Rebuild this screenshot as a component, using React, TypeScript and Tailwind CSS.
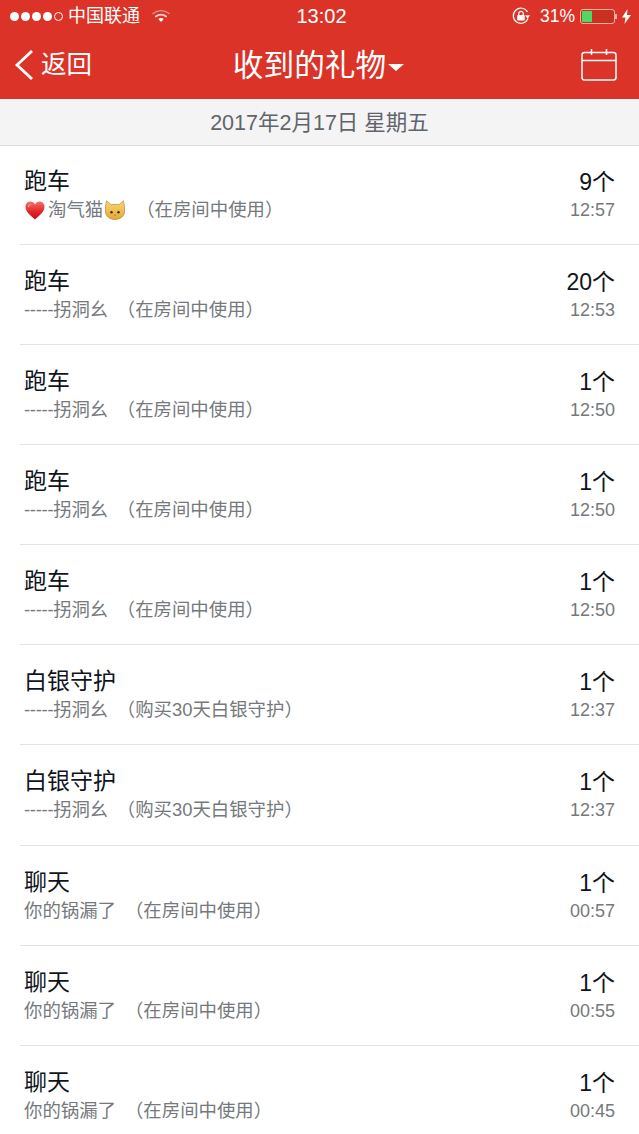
import React from 'react';

const font = { fontFamily: '"Liberation Sans", "Noto Sans CJK SC", sans-serif' };

interface GiftRecord {
  name: string;
  sender: string;
  detail: string;
  count: string;
  time: string;
  emoji?: boolean;
}

const records: GiftRecord[] = [
  { name: '跑车', sender: '淘气猫', detail: '（在房间中使用）', count: '9个', time: '12:57', emoji: true },
  { name: '跑车', sender: '-----拐洞幺', detail: '（在房间中使用）', count: '20个', time: '12:53' },
  { name: '跑车', sender: '-----拐洞幺', detail: '（在房间中使用）', count: '1个', time: '12:50' },
  { name: '跑车', sender: '-----拐洞幺', detail: '（在房间中使用）', count: '1个', time: '12:50' },
  { name: '跑车', sender: '-----拐洞幺', detail: '（在房间中使用）', count: '1个', time: '12:50' },
  { name: '白银守护', sender: '-----拐洞幺', detail: '（购买30天白银守护）', count: '1个', time: '12:37' },
  { name: '白银守护', sender: '-----拐洞幺', detail: '（购买30天白银守护）', count: '1个', time: '12:37' },
  { name: '聊天', sender: '你的锅漏了', detail: '（在房间中使用）', count: '1个', time: '00:57' },
  { name: '聊天', sender: '你的锅漏了', detail: '（在房间中使用）', count: '1个', time: '00:55' },
  { name: '聊天', sender: '你的锅漏了', detail: '（在房间中使用）', count: '1个', time: '00:45' },
];

const Heart = () => (
  <svg width="20" height="19" viewBox="0 0 20 19" className="shrink-0 ml-[1px]">
    <defs>
      <linearGradient id="heart" x1="0" y1="0" x2="0" y2="1">
        <stop offset="0" stopColor="#f4716a" />
        <stop offset=".55" stopColor="#e3262a" />
        <stop offset="1" stopColor="#c40f18" />
      </linearGradient>
    </defs>
    <path d="M10 18.500C5.500 14.500.5 11 .5 5.800.5 2.800 2.700.6 5.300.6 7.300.6 9 1.700 10 3.400 11 1.700 12.700.6 14.700.6c2.600 0 4.800 2.200 4.800 5.200 0 5.200-5 8.700-9.500 12.700z" fill="url(#heart)" />
    <path d="M3 5.500C3.500 3.800 5 3 6.500 3.300 5 4 4 5 3.800 6.500z" fill="#fff" opacity=".55" />
  </svg>
);

const Cat = () => (
  <svg width="20" height="20" viewBox="0 0 20 20" className="shrink-0 ml-[2px]">
    <defs>
      <linearGradient id="cat" x1="0" y1="0" x2="0" y2="1">
        <stop offset="0" stopColor="#f8d873" />
        <stop offset="1" stopColor="#e2a93a" />
      </linearGradient>
    </defs>
    <path d="M1.500.8 6.200 4.800c2.400-.6 5.200-.6 7.600 0L18.500.8c.8 3.600 1.200 7 1.200 10.200 0 5-4.500 8.500-9.700 8.500S.3 16 .3 11C.3 7.800.7 4.400 1.500.8z" fill="url(#cat)" stroke="#a97c2a" strokeWidth=".6" />
    <circle cx="6.500" cy="12.200" r="1.200" fill="#3d2a10" />
    <circle cx="13.500" cy="12.200" r="1.200" fill="#3d2a10" />
    <path d="M9 14.800h2l-1 1z" fill="#7a5417" />
  </svg>
);

const Wifi = () => (
  <svg width="18" height="14" viewBox="0 0 18 14" fill="none" stroke="#fff" strokeLinecap="round">
    <path d="M1 4.500C5.500.7 12.500.7 17 4.500" strokeWidth="1.300" opacity=".45" />
    <path d="M3.800 7.500c3-2.500 7.400-2.500 10.400 0" strokeWidth="1.700" opacity=".8" />
    <path d="M9 13 6.300 9.900c1.500-1.100 3.900-1.100 5.400 0z" fill="#fff" stroke="none" />
  </svg>
);

const OrientationLock = () => (
  <svg width="19" height="18" viewBox="0 0 19 18" fill="none" stroke="#fff">
    <path d="M16 11.500A7.600 7.600 0 1 1 15.500 5" strokeWidth="1.200" />
    <path d="M18 8.200 13.200 8.200 15.600 11.800z" fill="#fff" stroke="none" />
    <rect x="5.200" y="8" width="7.600" height="5.500" rx="1" fill="#fff" stroke="none" />
    <path d="M6.800 8V6.500a2.200 2.200 0 0 1 4.400 0V8" strokeWidth="1.200" />
  </svg>
);

const Bolt = () => (
  <svg width="9" height="15" viewBox="0 0 9 15" fill="#fff">
    <path d="M5.500 0 0 8.500h3.500L2.500 15 9 6H5z" />
  </svg>
);

const CalendarIcon = () => (
  <svg width="36" height="32" viewBox="0 0 36 32" fill="none" stroke="#fff" strokeWidth="1.500">
    <rect x="1" y="3.500" width="34" height="27.500" rx="2.500" />
    <path d="M1 11.500h34" />
    <path d="M10.500 0v6M25.500 0v6" />
  </svg>
);

const App: React.FC = () => {
  return (
    <div className="w-[639px] h-[1134px] overflow-hidden bg-white" style={font}>
      {/* Header */}
      <div className="bg-[#db3327] h-[99px] text-white">
        <div className="h-[32px] flex items-center justify-between pl-[10px] pr-[8px]">
          <div className="w-[230px] flex items-center">
            <div className="flex items-center gap-[2px]">
              <span className="w-[9px] h-[9px] rounded-full bg-white" />
              <span className="w-[9px] h-[9px] rounded-full bg-white" />
              <span className="w-[9px] h-[9px] rounded-full bg-white" />
              <span className="w-[9px] h-[9px] rounded-full bg-white" />
              <span className="w-[9px] h-[9px] rounded-full border border-white" />
            </div>
            <span className="ml-[5px] text-[18px] leading-none">中国联通</span>
            <span className="ml-[12px]"><Wifi /></span>
          </div>
          <span className="ml-[2px] text-[20px] leading-none">13:02</span>
          <div className="w-[230px] flex items-center justify-end">
            <OrientationLock />
            <span className="ml-[9px] mt-[1px] text-[17.500px] leading-none">31%</span>
            <div className="ml-[5px] w-[35px] h-[15px] rounded-[3px] border border-[#f3b0aa] bg-[#c9301f] p-[1px]">
              <div className="w-[10px] h-full bg-[#4cd964]" />
            </div>
            <span className="w-[2px] h-[5px] bg-[#f3b0aa]" />
            <span className="ml-[5px]"><Bolt /></span>
          </div>
        </div>
        <div className="h-[67px] pb-[1px] flex items-center justify-between pl-[14px] pr-[22px]">
          <div className="w-[140px] flex items-center">
            <svg width="20" height="32" viewBox="0 0 20 32" fill="none" stroke="#fff" strokeWidth="2.800">
              <path d="M18 2 3 16l15 14" />
            </svg>
            <span className="ml-[7px] text-[25.500px] leading-none">返回</span>
          </div>
          <div className="ml-[6px] mt-[3px] flex items-center">
            <span className="text-[30.700px] leading-none">收到的礼物</span>
            <span className="ml-[2px] mt-[3px] w-0 h-0 border-x-[8px] border-x-transparent border-t-[7px] border-t-white" />
          </div>
          <div className="w-[140px] flex justify-end">
            <CalendarIcon />
          </div>
        </div>
      </div>

      {/* Date bar */}
      <div className="h-[47px] pt-[2px] bg-[#f4f4f5] border-b border-[#dedfe0] flex items-center justify-center text-[21.500px] text-[#5f656b]">
        2017年2月17日 星期五
      </div>

      {/* Records */}
      <div>
        {records.map((record, index) => (
          <div
            key={index}
            className={`${index === 6 ? 'h-[101px]' : 'h-[100px]'} first:h-[99px] pt-[22px] first:pt-[21px] ml-[20px] pl-[4px] pr-[24px] flex justify-between border-b border-[#e3e3e3] last:border-b-0`}
          >
            <div>
              <div className="text-[23px] leading-[29px] text-[#10141c]">{record.name}</div>
              <div className="flex items-center h-[28px] text-[18.400px] leading-none text-[#75797d] whitespace-pre">
                {record.emoji && <Heart />}
                <span className={record.emoji ? 'ml-[3px]' : record.sender.startsWith('-') ? 'tracking-[-0.25px]' : ''}>
                  {record.sender}
                </span>
                {record.emoji && <Cat />}
                <span className={record.emoji ? 'ml-[11px]' : 'ml-[9px]'}>{record.detail}</span>
              </div>
            </div>
            <div className="text-right">
              <div className="text-[23px] leading-[30px] text-[#10141c]">{record.count}</div>
              <div className="text-[18px] leading-[26px] text-[#75797d]">{record.time}</div>
            </div>
          </div>
        ))}
      </div>
    </div>
  );
};

export default App;
